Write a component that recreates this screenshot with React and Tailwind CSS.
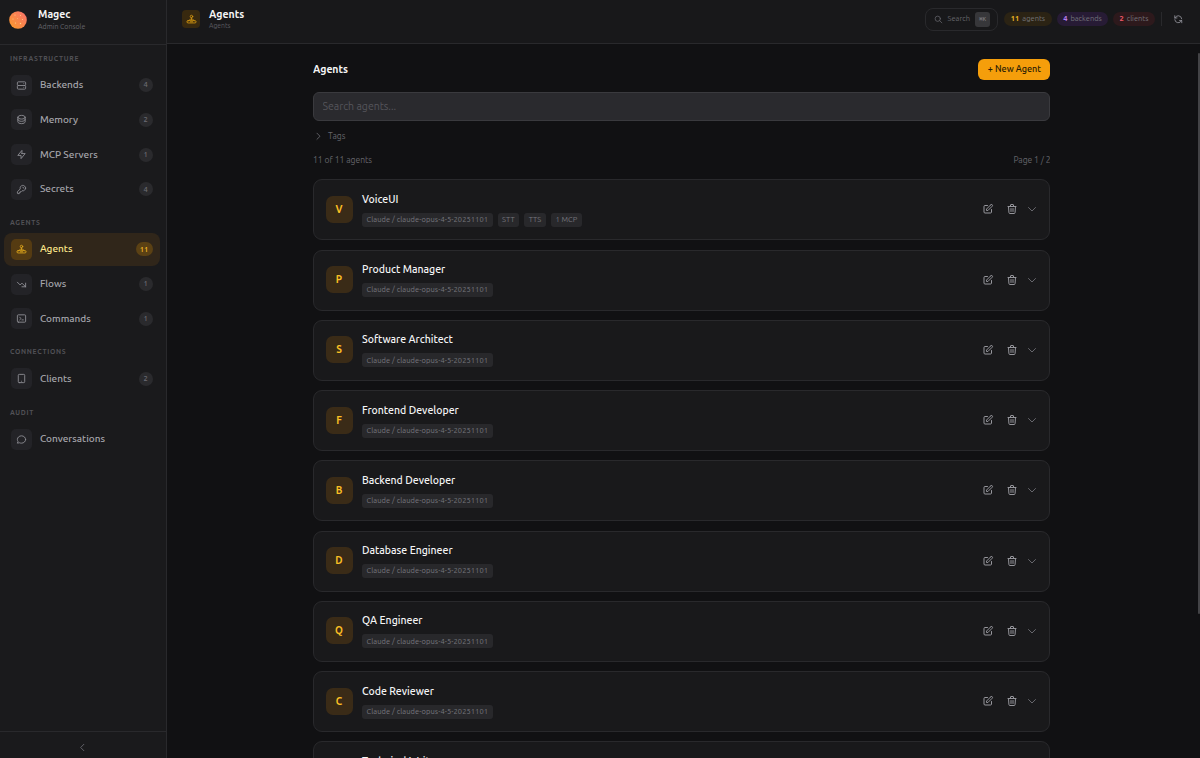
import React from "react";
import {
  HiOutlineChevronDown,
  HiOutlineChevronLeft,
  HiOutlineChevronRight,
  HiOutlineDatabase,
  HiOutlineDeviceTablet,
  HiOutlineKey,
  HiOutlineLightningBolt,
  HiOutlinePencilAlt,
  HiOutlineRefresh,
  HiOutlineSearch,
  HiOutlineServer,
  HiOutlineTerminal,
  HiOutlineTrash,
  HiOutlineTrendingDown,
} from "react-icons/hi";

const AgentIcon = ({ className }) => (
  <svg
    viewBox="0 0 24 24"
    fill="none"
    stroke="currentColor"
    strokeWidth="1.8"
    strokeLinecap="round"
    strokeLinejoin="round"
    className={className}
  >
    <circle cx="12" cy="5.5" r="2.7" />
    <path d="M12 8.2v3.3M6 14.5l3.5-3h5l3.5 3" />
    <rect x="2" y="14.5" width="20" height="5" rx="2.5" />
    <path d="M9.5 17h5" />
  </svg>
);

const ChatIcon = ({ className }) => (
  <svg
    viewBox="0 0 24 24"
    fill="none"
    stroke="currentColor"
    strokeWidth="2"
    strokeLinecap="round"
    strokeLinejoin="round"
    className={className}
  >
    <path d="M21 12c0 4.4-4 8-9 8a9.9 9.9 0 01-4.3-.9L3 20l1.4-3.7C3.5 15 3 13.6 3 12c0-4.4 4-8 9-8s9 3.6 9 8z" />
  </svg>
);

const sections = [
  {
    title: "Infrastructure",
    items: [
      { label: "Backends", count: 4, icon: HiOutlineServer },
      { label: "Memory", count: 2, icon: HiOutlineDatabase },
      { label: "MCP Servers", count: 1, icon: HiOutlineLightningBolt },
      { label: "Secrets", count: 4, icon: HiOutlineKey },
    ],
  },
  {
    title: "Agents",
    items: [
      { label: "Agents", count: 11, icon: AgentIcon, active: true },
      { label: "Flows", count: 1, icon: HiOutlineTrendingDown },
      { label: "Commands", count: 1, icon: HiOutlineTerminal },
    ],
  },
  {
    title: "Connections",
    items: [{ label: "Clients", count: 2, icon: HiOutlineDeviceTablet }],
  },
  {
    title: "Audit",
    items: [{ label: "Conversations", icon: ChatIcon }],
  },
];

const model = "Claude / claude-opus-4-5-20251101";

const agents = [
  { name: "VoiceUI", tags: [model, "STT", "TTS", "1 MCP"] },
  { name: "Product Manager", tags: [model] },
  { name: "Software Architect", tags: [model] },
  { name: "Frontend Developer", tags: [model] },
  { name: "Backend Developer", tags: [model] },
  { name: "Database Engineer", tags: [model] },
  { name: "QA Engineer", tags: [model] },
  { name: "Code Reviewer", tags: [model] },
  { name: "Technical Writer", tags: [model] },
];

const Logo = () => (
  <svg viewBox="0 0 18 18" className="size-[18px]">
    <defs>
      <linearGradient id="sun" x1="1" y1="0" x2="0" y2="1">
        <stop offset="0" stopColor="#f8716e" />
        <stop offset="1" stopColor="#fb9a28" />
      </linearGradient>
    </defs>
    <circle cx="9" cy="9" r="8.8" fill="url(#sun)" />
    <g fill="#ffd08a">
      <circle cx="6" cy="4" r=".6" />
      <circle cx="11.5" cy="4.5" r=".5" />
      <circle cx="4" cy="8" r=".5" />
      <circle cx="8.5" cy="7.5" r=".4" />
      <circle cx="13.5" cy="8.5" r=".5" />
      <circle cx="6.5" cy="12" r=".6" />
      <circle cx="11.5" cy="12.5" r=".7" />
    </g>
  </svg>
);

const NavItem = ({ item }) => {
  const Icon = item.icon;
  return (
    <div
      className={`flex h-[33px] items-center rounded-lg pl-[7.4px] pr-[7.5px] ${
        item.active ? "bg-[#30261a] text-[#fde68a]" : "text-[#a5a5ab]"
      }`}
    >
      <div
        className={`flex size-[21px] items-center justify-center rounded-[5px] ${
          item.active ? "bg-[#553b12] text-[#e5ab1c]" : "bg-[#232327] text-[#8c8c93]"
        }`}
      >
        <Icon className="size-[11px]" />
      </div>
      <span className="ml-[7.5px] flex-1 pb-px text-[10px] font-medium">{item.label}</span>
      {item.count && (
        <span
          className={`flex h-3.5 items-center justify-center rounded-full text-[7.5px] font-medium ${
            item.active ? "w-[17px] bg-[#5b4114] text-[#fbbf24]" : "w-3.5 bg-[#2a2a2d] text-[#6c6c73]"
          }`}
        >
          {item.count}
        </span>
      )}
    </div>
  );
};

const Sidebar = () => (
  <aside className="flex w-[167px] shrink-0 flex-col border-r border-[#29292c] bg-[#1a1a1c]">
    <div className="flex h-[45px] items-center gap-2.5 border-b border-[#29292c] pb-[5px] pl-[9.4px]">
      <Logo />
      <div className="pl-[0.7px]">
        <p className="text-[10.5px] font-bold leading-[13px] text-[#f4f4f5]">Magec</p>
        <p className="text-[7px] leading-[10px] text-[#66666c]">Admin Console</p>
      </div>
    </div>
    <nav className="flex flex-1 flex-col gap-[13.1px] pl-1 pr-1.5 pt-[9.5px]">
      {sections.map((section) => (
        <div key={section.title}>
          <h3 className="mb-1.5 pl-1.5 text-[6.8px] font-semibold uppercase leading-2 tracking-[0.7px] text-[#515156]">
            {section.title}
          </h3>
          <div className="flex flex-col gap-[1.75px]">
            {section.items.map((item) => (
              <NavItem key={item.label} item={item} />
            ))}
          </div>
        </div>
      ))}
    </nav>
    <div className="flex h-[27px] items-center justify-center border-t border-[#29292c] pr-0.5 pt-[5px] text-[#66666c]">
      <HiOutlineChevronLeft className="size-[11px]" />
    </div>
  </aside>
);

const Header = () => (
  <header className="flex h-11 shrink-0 items-center border-b border-[#29292c] bg-[#18181a] pb-[5px] pl-[15px] pr-[16.5px]">
    <div className="flex size-[18px] items-center justify-center rounded bg-[#38290f] text-[#d99a10]">
      <AgentIcon className="size-[11px]" />
    </div>
    <div className="ml-[9px] flex-1">
      <p className="text-[10.5px] font-semibold leading-[13px] text-[#f4f4f5]">Agents</p>
      <p className="text-[6.8px] leading-[9px] text-[#5c5c62]">Agents</p>
    </div>
    <div className="flex h-[23px] w-[73px] items-center rounded-lg border border-[#29292c] pl-2 text-[#66666c]">
      <HiOutlineSearch className="size-[9px]" />
      <span className="ml-[4.5px] flex-1 text-[7.5px]">Search</span>
      <kbd className="mr-[7px] flex h-[15px] w-[15px] items-center justify-center rounded-[3px] bg-[#37373a] text-[6px] text-[#85858b]">
        ⌘K
      </kbd>
    </div>
    <div className="ml-1.5 flex items-center gap-[5px] text-[7.5px] text-[#737379]">
      <span className="flex h-3.5 w-[48px] items-center justify-center gap-[3px] rounded-full bg-[#2b2314]">
        <b className="font-semibold text-[#e9b322]">11</b>agents
      </span>
      <span className="flex h-3.5 w-[51px] items-center justify-center gap-[3px] rounded-full bg-[#271b35]">
        <b className="font-semibold text-[#b57bee]">4</b>backends
      </span>
      <span className="flex h-3.5 w-[42px] items-center justify-center gap-[3px] rounded-full bg-[#2d191c]">
        <b className="font-semibold text-[#f05868]">2</b>clients
      </span>
    </div>
    <div className="ml-1.5 h-3.5 w-px bg-[#29292c]" />
    <HiOutlineRefresh className="ml-[11px] size-[10.5px] text-[#8c8c93]" />
  </header>
);

const AgentCard = ({ agent }) => (
  <div className="flex h-[61px] shrink-0 items-center rounded-[9px] border border-[#29292c] bg-[#19191b] pb-px pl-[11.5px] pr-[11.5px]">
    <div className="flex size-[27px] items-center justify-center rounded-[7px] bg-[#3a2b17] text-[10px] font-bold text-[#fbbf24]">
      {agent.name[0]}
    </div>
    <div className="ml-[9.5px] flex-1">
      <p className="text-[10.5px] font-medium leading-[14px] text-[#f4f4f5]">{agent.name}</p>
      <div className="mt-[7px] flex gap-[5px]">
        {agent.tags.map((tag) => (
          <span
            key={tag}
            className="flex h-3.5 items-center rounded-[3px] bg-[#28282b] px-[4.5px] text-[7.5px] tracking-[0.08px] text-[#77777e]"
          >
            {tag}
          </span>
        ))}
      </div>
    </div>
    <div className="flex items-center text-[#96969c]">
      <HiOutlinePencilAlt className="size-[12px]" />
      <HiOutlineTrash className="ml-[12px] size-[12px]" />
      <HiOutlineChevronDown className="ml-2 size-3 text-[#66666c]" />
    </div>
  </div>
);

const App = () => {
  return (
    <div className="flex h-[758px] w-[1200px] overflow-hidden bg-[#111113] font-['Ubuntu','Noto_Sans',sans-serif]">
      <Sidebar />
      <div className="flex min-w-0 flex-1 flex-col">
        <Header />
        <div className="flex min-h-0 flex-1">
          <main className="ml-[146px] flex w-[737.4px] flex-col overflow-hidden pt-[15px]">
            <div className="flex h-[21px] shrink-0 items-center justify-between">
              <h2 className="text-[10.5px] font-semibold tracking-[-0.05px] text-[#f4f4f5]">Agents</h2>
              <button className="h-[21px] w-[72px] rounded-md bg-[#f59e0b] text-[9px] font-medium text-[#2a1c05]">
                + New Agent
              </button>
            </div>
            <input
              placeholder="Search agents..."
              className="mt-3 h-[29px] shrink-0 rounded-md border border-[#3a3a3e] bg-[#2a2a2e] px-[8.5px] pb-[2px] text-[10.5px] outline-none placeholder:text-[#55555b]"
            />
            <div className="mt-[9px] flex h-3 shrink-0 items-center gap-[4.5px] text-[8.5px] text-[#66666c]">
              <HiOutlineChevronRight className="size-[10.5px]" />
              Tags
            </div>
            <div className="mt-3 flex h-3 shrink-0 items-center justify-between text-[8.5px] text-[#66666c]">
              <span>11 of 11 agents</span>
              <span className="tracking-[-0.05px]">Page 1 / 2</span>
            </div>
            <div className="mt-[13.3px] flex flex-col gap-[9.25px]">
              {agents.map((agent) => (
                <AgentCard key={agent.name} agent={agent} />
              ))}
            </div>
          </main>
          <div className="flex flex-1 justify-end pt-[9px]">
            <div className="h-[561px] w-0.5 rounded-full bg-[#434346]" />
          </div>
        </div>
      </div>
    </div>
  );
};

export default App;
